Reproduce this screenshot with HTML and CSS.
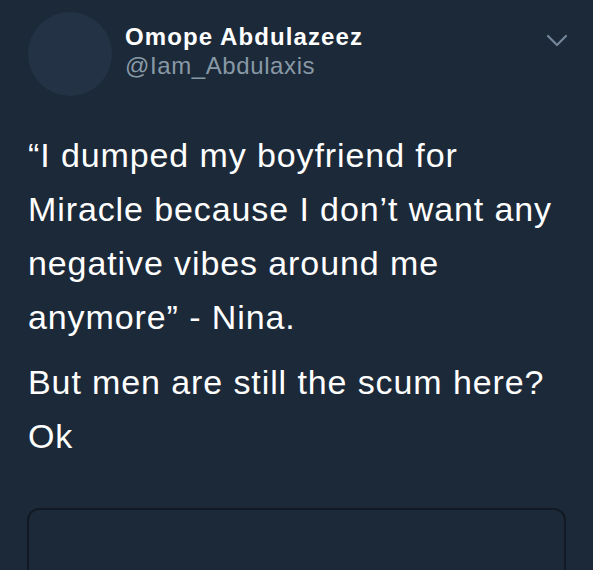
FILE: index.html
```html
<!DOCTYPE html>
<html>
<head>
<meta charset="utf-8">
<link rel="stylesheet" href="styles.css">
</head>
<body>
<div class="tweet">
  <div class="header">
    <div class="avatar"></div>
    <div class="names">
      <div class="name">Omope Abdulazeez</div>
      <div class="handle">@Iam_Abdulaxis</div>
    </div>
    <svg class="chevron" width="22" height="14" viewBox="0 0 22 14"><path d="M2 2 L11 11 L20 2" fill="none" stroke="#73869a" stroke-width="2.2" stroke-linecap="round" stroke-linejoin="round"/></svg>
  </div>
  <div class="body">
    <p>“I dumped my boyfriend for<br>Miracle because I don’t want any<br>negative vibes around me<br>anymore” - Nina.</p>
    <p>But men are still the scum here?<br>Ok</p>
  </div>
  <div class="card"></div>
</div>
</body>
</html>
```
FILE: styles.css
```css
html, body {
  margin: 0;
  padding: 0;
  background: #1c2938;
  height: 100%;
  overflow: hidden;
}
.tweet {
  padding: 12px 27px 0 28px;
  font-family: "Liberation Sans", Arial, sans-serif;
  color: #ffffff;
}
.header {
  display: flex;
  align-items: flex-start;
}
.avatar {
  width: 84px;
  height: 84px;
  border-radius: 50%;
  background: #233345;
  flex: none;
}
.names {
  margin-left: 13px;
  padding-top: 11px;
  flex: 1;
}
.name {
  font-weight: bold;
  font-size: 24px;
  letter-spacing: 1.1px;
  line-height: 28px;
  color: #ffffff;
}
.handle {
  font-size: 24px;
  letter-spacing: 0.6px;
  line-height: 30px;
  color: #8899a6;
}
.chevron {
  margin-top: 22px;
  margin-right: -2px;
  flex: none;
}
.body {
  margin-top: 32px;
}
.body p {
  margin: 0 0 11px 0;
  font-size: 34px;
  letter-spacing: 0.9px;
  line-height: 54px;
  color: #ffffff;
}
.card {
  margin-top: 45px;
  height: 120px;
  border: 2px solid #111a24;
  border-radius: 12px;
  margin-left: -1px;
}
```
